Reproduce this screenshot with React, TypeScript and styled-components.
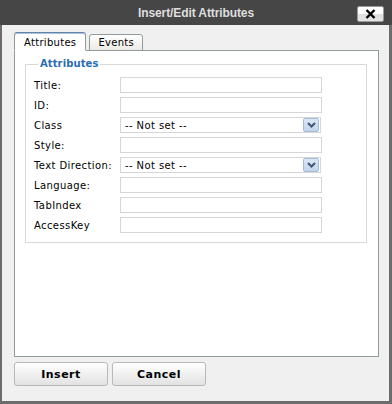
import React from 'react';
import styled, { createGlobalStyle } from 'styled-components';

const GlobalStyle = createGlobalStyle`
  html, body {
    margin: 0;
    padding: 0;
    background: #ffffff;
  }
  body {
    font-family: "DejaVu Sans", Verdana, sans-serif;
  }
`;

const Window = styled.div`
  width: 392px;
  height: 404px;
  display: flex;
  flex-direction: column;
  background: #f0f0f0;
`;

const TitleBar = styled.div`
  height: 25px;
  flex: none;
  background: #464646;
  display: grid;
  grid-template-columns: 1fr auto 1fr;
  align-items: center;
  padding: 0 8px;
  box-sizing: border-box;
`;

const Title = styled.div`
  grid-column: 2;
  font-family: "Liberation Sans", Arial, sans-serif;
  font-weight: 700;
  font-size: 12px;
  color: #dedede;
  letter-spacing: -0.1px;
`;

const CloseButton = styled.button`
  grid-column: 3;
  justify-self: end;
  width: 27px;
  height: 16px;
  padding: 0;
  margin-top: 2px;
  border: 1px solid #9a9a9a;
  border-radius: 2px;
  background: linear-gradient(#ffffff 0%, #ffffff 50%, #dfdfdf 50%, #e4e4e4 100%);
  display: flex;
  align-items: center;
  justify-content: center;
  cursor: pointer;
`;

const Body = styled.div`
  flex: 1;
  display: flex;
  flex-direction: column;
  border-left: 2px solid #6c6c6c;
  border-right: 3px solid #6c6c6c;
  border-bottom: 3px solid #6c6c6c;
  padding: 8px 10px 0 12px;
`;

const TabRow = styled.div`
  display: flex;
  align-items: flex-end;
  gap: 3px;
  height: 18px;
  margin-bottom: -1px;
  position: relative;
  z-index: 1;
`;

const Tab = styled.div<{ $active?: boolean }>`
  box-sizing: border-box;
  height: ${p => (p.$active ? '19px' : '17px')};
  padding: 0 ${p => (p.$active ? '9px' : '8px')};
  display: flex;
  align-items: center;
  font-size: 10px;
  letter-spacing: 0.3px;
  color: #000;
  border: 1px solid #919b9c;
  border-bottom: ${p => (p.$active ? '1px solid #ffffff' : '1px solid #919b9c')};
  border-top-color: ${p => (p.$active ? '#5f84a8' : '#919b9c')};
  border-radius: 3px 3px 0 0;
  background: ${p => (p.$active ? '#ffffff' : 'linear-gradient(#ffffff, #ecebe6)')};
  box-shadow: ${p => (p.$active ? 'inset 0 1px 0 #a9c3dc' : 'none')};
  padding-top: ${p => (p.$active ? '1px' : '0')};
`;

const Panel = styled.div`
  height: 307px;
  box-sizing: border-box;
  background: #ffffff;
  border: 1px solid #919b9c;
  padding: 7px 11px 0 10px;
`;

const FieldSet = styled.fieldset`
  margin: 0;
  border: 1px solid #d9d9d9;
  padding: 7px 8px 9px 8px;
`;

const Legend = styled.legend`
  padding: 0 2px;
  margin-left: 4px;
  font-size: 10px;
  font-weight: 700;
  color: #2a6db5;
  line-height: 12px;
  letter-spacing: 0.1px;
`;

const FormGrid = styled.div`
  display: grid;
  grid-template-columns: 86px 202px;
  row-gap: 4px;
  align-items: center;
`;

const Label = styled.label`
  font-size: 10px;
  letter-spacing: 0.4px;
  color: #000;
  white-space: nowrap;
`;

const TextInput = styled.input`
  box-sizing: border-box;
  height: 16px;
  width: 202px;
  margin: 0;
  padding: 0 3px;
  border: 1px solid #d6d6d6;
  background: #fff;
  font-family: inherit;
  font-size: 10px;
  outline: none;
`;

const SelectBox = styled.div`
  box-sizing: border-box;
  height: 16px;
  width: 201px;
  display: flex;
  align-items: center;
  border: 1px solid #d6d6d6;
  background: #fff;
  padding-right: 1px;
`;

const SelectField = styled.select`
  flex: 1;
  appearance: none;
  border: none;
  background: transparent;
  font-family: inherit;
  font-size: 10px;
  letter-spacing: 0.4px;
  color: #000;
  padding: 0 0 0 4px;
  margin: 0;
  height: 14px;
  outline: none;
`;

const ArrowButton = styled.span`
  box-sizing: border-box;
  width: 16px;
  height: 14px;
  border: 1px solid #a5bcd8;
  border-radius: 2px;
  background: linear-gradient(#dde7f5, #c3d3ea);
  display: flex;
  align-items: center;
  justify-content: center;
`;

const ButtonRow = styled.div`
  display: flex;
  gap: 4px;
  margin-top: 5px;
`;

const Button = styled.button`
  width: 94px;
  height: 24px;
  border: 1px solid #b9b9b9;
  border-radius: 3px;
  background: linear-gradient(#ffffff, #e2e2e2);
  font-family: "DejaVu Sans", Verdana, sans-serif;
  font-weight: 700;
  font-size: 11px;
  letter-spacing: 0.5px;
  color: #000;
  padding: 0;
  cursor: pointer;
`;

const Chevron = () => (
  <svg width="9" height="6" viewBox="0 0 9 6">
    <path d="M1 1 L4.5 4.5 L8 1" fill="none" stroke="#3e5478" strokeWidth="2" />
  </svg>
);

const CloseIcon = () => (
  <svg width="11" height="10" viewBox="0 0 11 10">
    <path d="M1.5 1 L9.5 9 M9.5 1 L1.5 9" stroke="#000" strokeWidth="2.4" />
  </svg>
);

interface FieldProps {
  label: string;
  kind?: 'text' | 'select';
}

const fields: FieldProps[] = [
  { label: 'Title:' },
  { label: 'ID:' },
  { label: 'Class', kind: 'select' },
  { label: 'Style:' },
  { label: 'Text Direction:', kind: 'select' },
  { label: 'Language:' },
  { label: 'TabIndex' },
  { label: 'AccessKey' },
];

const Field: React.FC<FieldProps> = ({ label, kind = 'text' }) => (
  <>
    <Label>{label}</Label>
    {kind === 'select' ? (
      <SelectBox>
        <SelectField defaultValue="">
          <option value="">-- Not set --</option>
        </SelectField>
        <ArrowButton>
          <Chevron />
        </ArrowButton>
      </SelectBox>
    ) : (
      <TextInput type="text" />
    )}
  </>
);

export default function App() {
  return (
    <>
      <GlobalStyle />
      <Window>
        <TitleBar>
          <Title>Insert/Edit Attributes</Title>
          <CloseButton aria-label="Close">
            <CloseIcon />
          </CloseButton>
        </TitleBar>
        <Body>
          <TabRow>
            <Tab $active>Attributes</Tab>
            <Tab>Events</Tab>
          </TabRow>
          <Panel>
            <FieldSet>
              <Legend>Attributes</Legend>
              <FormGrid>
                {fields.map(f => (
                  <Field key={f.label} {...f} />
                ))}
              </FormGrid>
            </FieldSet>
          </Panel>
          <ButtonRow>
            <Button>Insert</Button>
            <Button>Cancel</Button>
          </ButtonRow>
        </Body>
      </Window>
    </>
  );
}
